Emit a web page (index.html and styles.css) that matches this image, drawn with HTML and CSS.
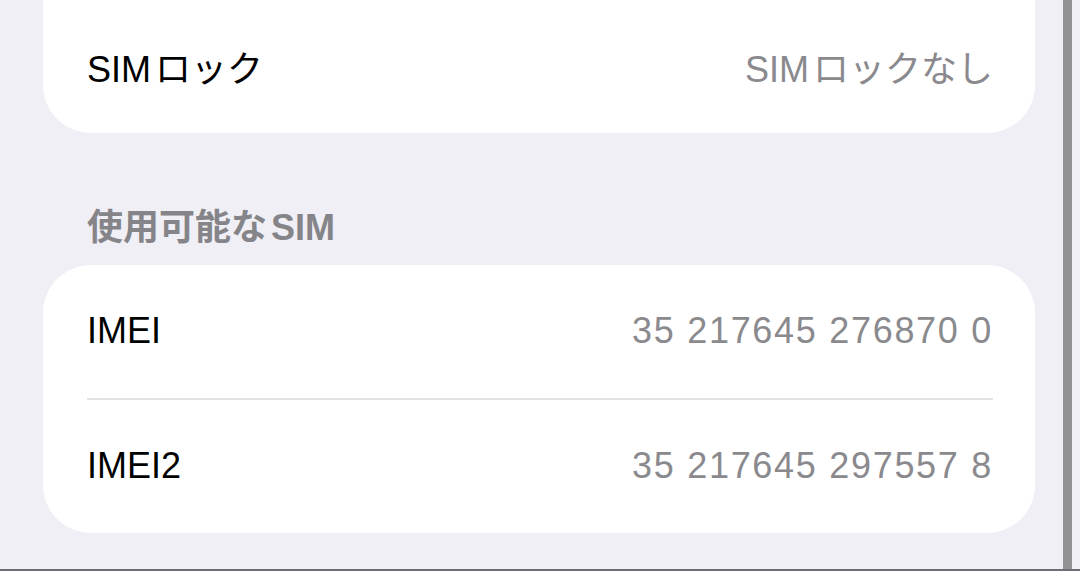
FILE: index.html
```html
<!DOCTYPE html>
<html lang="ja">
<head>
    <meta charset="UTF-8">
    <meta name="viewport" content="width=device-width, initial-scale=1.0">
    <title>情報</title>
    <link rel="stylesheet" href="styles.css">
</head>
<body>
    <div class="frame">
        <main class="screen">
            <!-- SIM lock card (top of it is scrolled out of view) -->
            <section class="card card-cut">
                <div class="row">
                    <span class="label"><span class="latin">SIM</span>ロック</span>
                    <span class="value"><span class="latin">SIM</span>ロックなし</span>
                </div>
            </section>

            <h2 class="section-title">使用可能な<span class="latin-after">SIM</span></h2>

            <section class="card">
                <div class="row">
                    <span class="label">IMEI</span>
                    <span class="value digits">35 217645 276870 0</span>
                </div>
                <div class="row">
                    <span class="label">IMEI2</span>
                    <span class="value digits">35 217645 297557 8</span>
                </div>
            </section>
        </main>
        <div class="edge"></div>
        <div class="gutter"></div>
    </div>
    <div class="bottom-line"></div>
</body>
</html>
```

FILE: styles.css
```css
:root {
    --bg: #f0eff5;
    --card: #ffffff;
    --text: #000000;
    --muted: #8a8a8e;
    --header: #858589;
    --divider: #e3e3e8;
}

* {
    margin: 0;
    padding: 0;
    box-sizing: border-box;
}

body {
    width: 1080px;
    height: 571px;
    overflow: hidden;
    background: var(--bg);
    font-family: "Liberation Sans", "Noto Sans CJK JP", sans-serif;
    color: var(--text);
}

/* Frame: screen + scrollbar-like edge */
.frame {
    display: flex;
    height: 569px;
}

.screen {
    width: 1063px;
    padding-left: 43px;
    padding-right: 28px;
}

.edge {
    width: 9px;
    background: #929196;
}

.gutter {
    flex: 1;
    background: var(--bg);
}

.bottom-line {
    height: 2px;
    background: #6d6d72;
}

/* Cards */
.card {
    background: var(--card);
    border-radius: 48px;
}

.card-cut {
    border-top-left-radius: 0;
    border-top-right-radius: 0;
}

.row {
    display: flex;
    justify-content: space-between;
    align-items: center;
    height: 133px;
    margin: 0 42px 0 44px;
    padding-bottom: 1px;
    font-size: 36px;
}

.row + .row {
    border-top: 2px solid var(--divider);
    height: 135px;
}

.value {
    color: var(--muted);
}

.digits {
    letter-spacing: 1.7px;
}

/* small gap between latin and kana, like the system font */
.latin {
    margin-right: 4px;
}

.latin-after {
    margin-left: 4px;
}

/* Section header */
.section-title {
    font-size: 36px;
    font-weight: bold;
    color: var(--header);
    line-height: 44px;
    margin: 73px 0 15px 44px;
}
```
